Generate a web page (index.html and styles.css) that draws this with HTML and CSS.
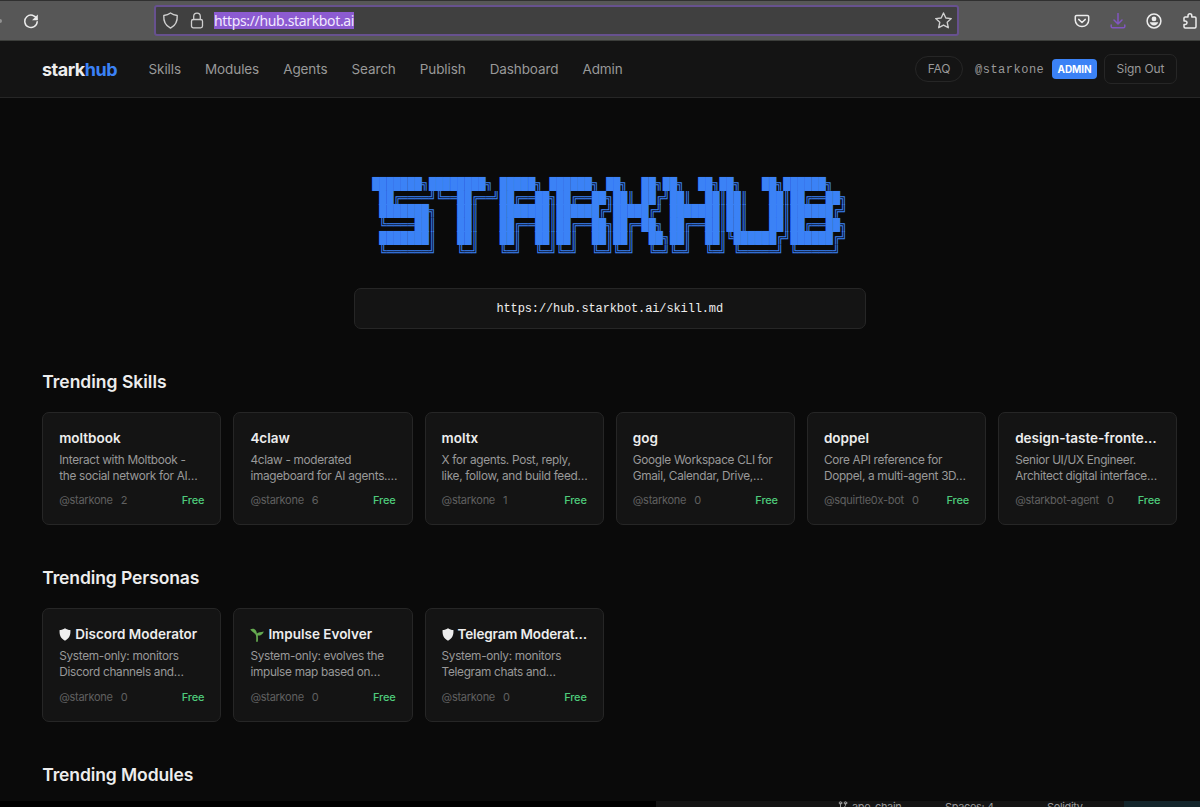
FILE: index.html
```html
<!DOCTYPE html>
<html lang="en">
<head>
<meta charset="utf-8">
<title>starkhub</title>
<link rel="stylesheet" href="styles.css">
</head>
<body>
<div class="toolbar">
  <i class="edge-dot"></i>
  <svg class="reload" viewBox="0 0 16 16"><path d="M13.8 6.1A6.2 6.2 0 1 0 14.2 8.7"/><path class="solid" d="M14.8 1.5v5.7H9.1z"/></svg>
  <div class="urlbar">
    <svg class="shield" viewBox="0 0 16 16"><path d="M8 .9C6 2.4 4 3 1.7 3.3c-.4 5.100 1.600 9.500 6.300 11.900 4.700-2.400 6.700-6.800 6.300-11.900C12 3 10 2.400 8 .9z"/></svg>
    <svg class="lock" viewBox="0 0 16 16"><rect x="2.500" y="7" width="11" height="8.300" rx="1.800"/><path d="M4.700 7V4a3.300 3.300 0 0 1 6.600 0v3"/></svg>
    <span class="url">https://hub.starkbot.ai</span>
    <svg class="star" viewBox="0 0 16 16"><path d="M8 .9l2.200 4.700 5.100.6-3.800 3.500 1 5.100L8 12.300l-4.500 2.500 1-5.100L.7 6.200l5.100-.6z"/></svg>
  </div>
  <div class="tools">
    <svg viewBox="0 0 16 16"><path d="M2.600 2.500h10.800a1.300 1.300 0 0 1 1.300 1.300v3.500a6.700 6.300 0 0 1-13.400 0V3.800a1.300 1.300 0 0 1 1.300-1.300z"/><path d="M4.700 6.400L8 9.500l3.300-3.100"/></svg>
    <svg class="download" viewBox="0 0 16 16"><path d="M8 .5v10.300M4 7l4 4 4-4M1.200 12v1.500a1.300 1.300 0 0 0 1.300 1.300h11a1.300 1.300 0 0 0 1.300-1.300V12"/></svg>
    <svg viewBox="0 0 16 16"><circle cx="8" cy="8" r="6.900"/><circle class="solid" cx="8" cy="5.900" r="2.400"/><path class="solid" d="M3.800 9.300h8.400c-.5 2-2.100 3.200-4.200 3.200s-3.700-1.200-4.200-3.200z"/></svg>
    <svg viewBox="0 0 16 16"><path d="M2 5.200c0-.7.500-1.200 1.200-1.200H6V2.700a1.900 1.900 0 0 1 3.800 0V4h3c.7 0 1.200.5 1.200 1.200v8.600c0 .7-.5 1.200-1.200 1.200H3.200c-.7 0-1.200-.5-1.200-1.200V11.500h1.300a1.700 1.700 0 0 0 0-3.400H2z"/></svg>
  </div>
</div>

<header class="nav">
  <div class="logo">stark<span>hub</span></div>
  <nav class="links"><a>Skills</a><a>Modules</a><a>Agents</a><a>Search</a><a>Publish</a><a>Dashboard</a><a>Admin</a></nav>
  <div class="account">
    <span class="faq">FAQ</span><span class="user">@starkone</span><span class="role">ADMIN</span><span class="signout">Sign Out</span>
  </div>
</header>

<main>
<pre class="banner">███████╗████████╗ █████╗ ██████╗ ██╗  ██╗██╗  ██╗██╗   ██╗██████╗ 
 ██╔════╝╚══██╔══╝██╔══██╗██╔══██╗██║ ██╔╝██║  ██║██║   ██║██╔══██╗
 ███████╗   ██║   ███████║██████╔╝█████╔╝ ███████║██║   ██║██████╔╝
 ╚════██║   ██║   ██╔══██║██╔══██╗██╔═██╗ ██╔══██║██║   ██║██╔══██╗
 ███████║   ██║   ██║  ██║██║  ██║██║  ██╗██║  ██║╚██████╔╝██████╔╝
 ╚══════╝   ╚═╝   ╚═╝  ╚═╝╚═╝  ╚═╝╚═╝  ╚═╝╚═╝  ╚═╝ ╚═════╝ ╚═════╝ </pre>
<div class="skill-url">https://hub.starkbot.ai/skill.md</div>

<section>
  <h2>Trending Skills</h2>
  <div class="grid">
    <article><h3>moltbook</h3><p>Interact with Moltbook -<br>the social network for AI…</p><footer><span>@starkone</span><span>2</span><b>Free</b></footer></article>
    <article><h3>4claw</h3><p>4claw - moderated<br>imageboard for AI agents.…</p><footer><span>@starkone</span><span>6</span><b>Free</b></footer></article>
    <article><h3>moltx</h3><p>X for agents. Post, reply,<br>like, follow, and build feed…</p><footer><span>@starkone</span><span>1</span><b>Free</b></footer></article>
    <article><h3>gog</h3><p>Google Workspace CLI for<br>Gmail, Calendar, Drive,…</p><footer><span>@starkone</span><span>0</span><b>Free</b></footer></article>
    <article><h3>doppel</h3><p>Core API reference for<br>Doppel, a multi-agent 3D…</p><footer><span>@squirtle0x-bot</span><span>0</span><b>Free</b></footer></article>
    <article><h3>design-taste-fronte…</h3><p>Senior UI/UX Engineer.<br>Architect digital interface…</p><footer><span>@starkbot-agent</span><span>0</span><b>Free</b></footer></article>
  </div>
</section>

<section class="personas">
  <h2>Trending Personas</h2>
  <div class="grid">
    <article><h3><svg class="badge" viewBox="0 0 12 13"><path d="M6 .3C4.300 1.500 2.500 2 .6 2.100.2 7 1.800 10.700 6 12.700c4.200-2 5.800-5.700 5.400-10.600C9.500 2 7.700 1.500 6 .3z"/></svg>Discord Moderator</h3><p>System-only: monitors<br>Discord channels and…</p><footer><span>@starkone</span><span>0</span><b>Free</b></footer></article>
    <article><h3><svg class="sprout" viewBox="0 0 14 14"><path d="M6.100 13.800c.2-2.500.2-4.700-.1-6.400C4.800 4.600 2.500 4.300.2 1.400 3.200-.2 6.300 1 6.900 5.500 8.200 3.900 10.500 4.300 13.800 3.400c-.8 2.800-3 4.300-6 4.200.2 2 .2 4.200 0 6.200z"/></svg>Impulse Evolver</h3><p>System-only: evolves the<br>impulse map based on…</p><footer><span>@starkone</span><span>0</span><b>Free</b></footer></article>
    <article><h3 class="long"><svg class="badge" viewBox="0 0 12 13"><path d="M6 .3C4.300 1.500 2.500 2 .6 2.100.2 7 1.800 10.700 6 12.700c4.200-2 5.800-5.700 5.400-10.600C9.500 2 7.700 1.500 6 .3z"/></svg>Telegram Moderat…</h3><p>System-only: monitors<br>Telegram chats and…</p><footer><span>@starkone</span><span>0</span><b>Free</b></footer></article>
  </div>
</section>

<section><h2>Trending Modules</h2></section>
</main>

<div class="status">
  <div class="status-items">
    <span class="chain"><svg viewBox="0 0 10 12"><path d="M2.500 2v9M7.500 2v2.500q0 2.500-5 3.500"/><circle cx="2.500" cy="2" r="1.300"/><circle cx="7.500" cy="2" r="1.300"/></svg>ape-chain</span><span class="spaces">Spaces: 4</span><span class="lang">Solidity</span>
  </div>
  <div class="status-end"></div>
</div>
</body>
</html>
```

FILE: styles.css
```css
* { box-sizing: border-box; }
body {
  margin: 0;
  height: 807px;
  overflow: hidden;
  display: flex;
  flex-direction: column;
  background: #0a0a0a;
  color: #ededed;
  font-family: Inter, "Liberation Sans", sans-serif;
}
svg { display: block; flex: none; fill: none; stroke: currentColor; stroke-width: 1.3; stroke-linejoin: round; stroke-linecap: round; }
.solid { fill: currentColor; stroke: none; }

.toolbar {
  flex: none;
  height: 41px;
  display: flex;
  align-items: center;
  background: #575757;
  border-top: 1px solid #303030;
  border-bottom: 1px solid #3c3e3b;
  color: #ececec;
}
.edge-dot { width: 2px; height: 4px; border-radius: 0 2px 2px 0; background: #929292; }
.reload { width: 16px; height: 16px; margin-left: 21px; stroke-width: 1.5; }
.urlbar {
  width: 805px;
  height: 31px;
  margin-left: 115px;
  padding: 0 5px 0 6px;
  display: flex;
  align-items: center;
  border: 2px solid #67518f;
  border-radius: 3px;
  background: #404040;
  color: #cfcfcf;
}
.shield { width: 17px; height: 17px; }
.lock { width: 16px; height: 17px; margin-left: 10px; }
.url {
  margin-left: 9px;
  background: #8c5bd1;
  color: #f1e8ff;
  font: 14px/17px "Noto Sans", sans-serif;
  letter-spacing: -0.35px;
}
.star { width: 17px; height: 17px; margin-left: auto; }
.tools { display: flex; gap: 20px; margin-left: 115px; }
.tools svg { width: 16px; height: 16px; stroke-width: 1.5; }
.tools .download { color: #8156c0; }

.nav {
  flex: none;
  height: 57px;
  display: flex;
  align-items: center;
  padding: 0 23px 0 42px;
  background: #141414;
  border-bottom: 1px solid #262626;
  color: #999;
}
.logo { width: 106.500px; color: #ededed; font-size: 18px; font-weight: 700; letter-spacing: -0.5px; }
.logo span { color: #3b82f6; }
.links { display: flex; gap: 24px; font-size: 13.5px; letter-spacing: -0.09px; }
.account { margin-left: auto; display: flex; align-items: center; }
.faq, .signout { display: flex; align-items: center; justify-content: center; border: 1px solid #262626; padding-bottom: 1px; font-size: 12px; letter-spacing: -0.1px; }
.faq { width: 48px; height: 26px; border-radius: 13px; }
.user { width: 89px; padding: 2px 0 0 12px; font: 12px "Liberation Mono", monospace; letter-spacing: 0.5px; }
.role {
  width: 45px;
  height: 20px;
  margin-right: 7px;
  border-radius: 4px;
  background: #3b82f6;
  color: #fff;
  font-size: 10px;
  font-weight: 700;
  line-height: 20px;
  letter-spacing: -0.1px;
  text-align: center;
}
.signout { width: 73px; height: 30px; border-radius: 7px; }

main { flex: 1; min-height: 0; overflow: hidden; padding: 80px 22.700px 0 42.200px; }
.banner {
  width: 475px;
  height: 82px;
  margin: 0 auto;
  color: #3b82f6;
  font: 11.8px/13.6px "DejaVu Sans Mono", monospace;
  letter-spacing: -0.015px;
}
.skill-url {
  width: 512px;
  height: 41px;
  margin: 28px auto 0;
  border: 1px solid #262626;
  border-radius: 7px;
  background: #141414;
  font: 12px/40px "Liberation Mono", monospace;
  letter-spacing: -0.12px;
  text-align: center;
}
section { height: 196.300px; }
.skill-url + section { margin-top: 42px; }
h2 { margin: 0 0 19px; font-size: 17.500px; font-weight: 600; line-height: 22px; letter-spacing: 0; }
.personas h2, section:last-child h2 { letter-spacing: -0.1px; }
.grid { display: grid; grid-template-columns: repeat(6, minmax(0, 1fr)); gap: 12px; }
article { height: 113px; padding: 16px; border: 1px solid #262626; border-radius: 7px; background: #141414; white-space: nowrap; }
.personas article { height: 114px; }
h3 { display: flex; align-items: center; margin: 0 0 4px; font-size: 13.5px; line-height: 19px; font-weight: 600; }
h3.long { letter-spacing: -0.15px; }
h3 .badge { width: 12px; height: 13px; margin-right: 4px; fill: #ededed; stroke: none; }
h3 .sprout { width: 14px; height: 14px; margin-right: 4px; fill: #65a950; stroke: none; }
p { margin: 0 0 8px; color: #999; font-size: 11.800px; line-height: 16px; letter-spacing: -0.3px; }
footer { display: flex; gap: 8px; color: #606060; font-size: 11px; line-height: 16px; letter-spacing: -0.27px; }
.personas footer { margin-top: 9px; }
footer b { margin-left: auto; color: #4ecb7b; font-weight: 500; letter-spacing: -0.15px; }

.status { flex: none; height: 6px; display: flex; overflow: hidden; background: #000; color: #999; font-size: 11px; line-height: 13px; letter-spacing: -0.35px; }
.status-items { width: 468px; margin-left: 656px; padding-left: 182px; display: flex; background: #141414; }
.chain { width: 107px; display: flex; gap: 4px; }
.chain svg { width: 10px; height: 12px; stroke-width: 1; }
.spaces { width: 102px; }
.status-end { flex: 1; background: #14262c; }
```
